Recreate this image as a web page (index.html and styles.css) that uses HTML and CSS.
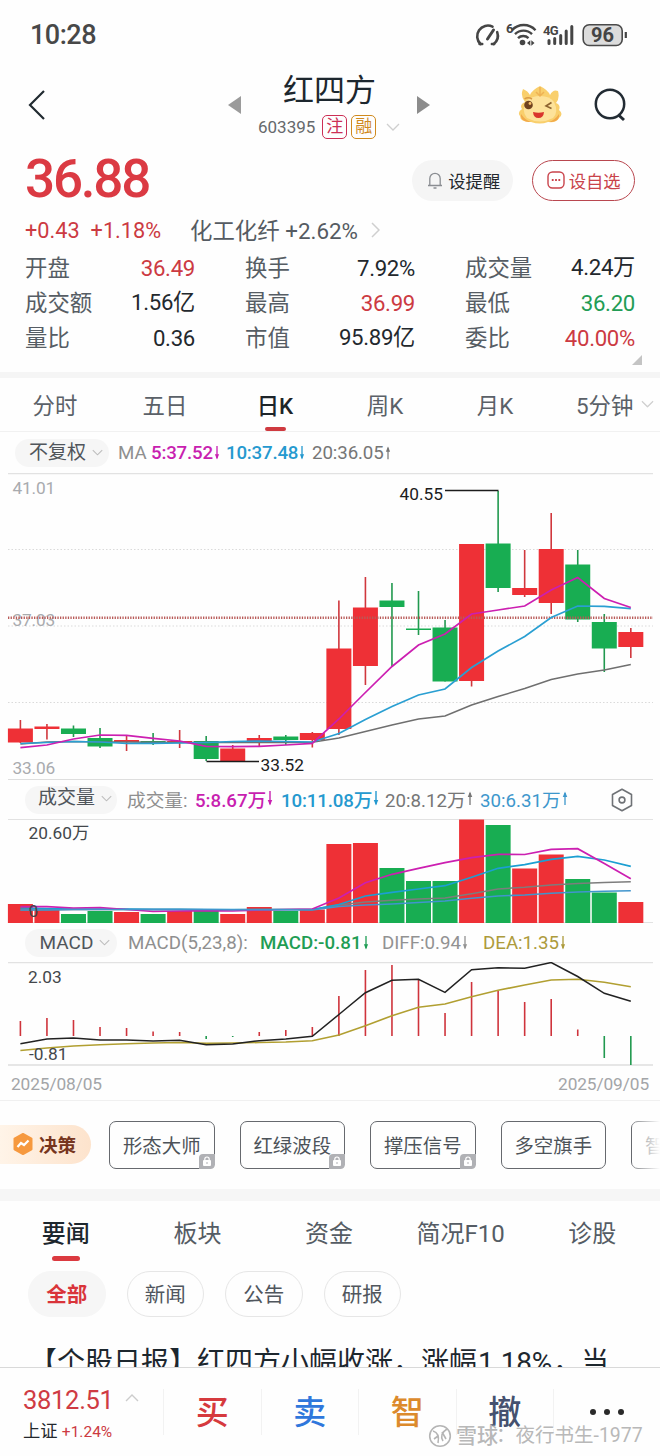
FILE: index.html
```
<!DOCTYPE html>
<html lang="zh-CN">
<head>
    <meta charset="UTF-8">
    <meta name="viewport" content="width=device-width, initial-scale=1.0">
    <title>红四方 603395</title>
    <link rel="stylesheet" href="styles.css">
</head>
<body>

<svg class="defs">
    <symbol id="down" viewBox="0 0 6 16"><path d="M3 0V14" stroke="currentColor" stroke-width="1.5"/><path d="M0.6 9.5H5.4L3 15.5Z" fill="currentColor"/></symbol>
    <symbol id="up" viewBox="0 0 6 16"><path d="M3 2V15" stroke="currentColor" stroke-width="1.4"/><path d="M0.6 6.5H5.4L3 0.5Z" fill="currentColor"/></symbol>
    <symbol id="chev" viewBox="0 0 14 8"><path d="M1 1L7 7L13 1" fill="none" stroke="currentColor" stroke-width="1.3"/></symbol>
    <symbol id="lock" viewBox="0 0 16 15"><path d="M4 0H16V10Q16 15 11 15H0V4Q0 0 4 0Z" fill="#b0b1b5"/><rect x="4" y="6" width="8" height="6" rx="1" fill="#fff"/><path d="M5.8 6.5V5.2a2.2 2.2 0 0 1 4.4 0V6.5" fill="none" stroke="#fff" stroke-width="1.2"/><path d="M8 8V10" stroke="#b0b1b5" stroke-width="1"/></symbol>
</svg>

<div class="phone">

    <!-- 状态栏 -->
    <div class="status">
        <span class="clock">10:28</span>
        <svg class="status-icons" width="154" height="26" viewBox="475 21 154 26">
            <g fill="none" stroke="#454545" stroke-width="2.6" stroke-linecap="round">
                <path d="M480.5 43A10.7 10.7 0 0 1 492.5 25.6"/>
                <path d="M497.2 31.2A10.7 10.7 0 0 1 493.8 43"/>
                <path d="M487.5 38L493.5 29" stroke-width="3"/>
                <path d="M479.5 43h2.8M491.8 43h2.4" stroke-width="2.4"/>
            </g>
            <text class="tiny" x="506" y="32">6</text>
            <g fill="none" stroke="#454545" stroke-width="2.4">
                <path d="M512 29.2A16 16 0 0 1 535.5 29.2"/>
                <path d="M515 33.2A12 12 0 0 1 532 33.2"/>
                <path d="M518 37.2A7.5 7.5 0 0 1 528.5 37.2"/>
            </g>
            <circle cx="522.5" cy="41.5" r="2.8" fill="#454545"/>
            <path d="M527 42L530.3 39.2V44.8ZM534.5 42L531.3 39.2V44.8Z" fill="#454545"/>
            <text class="tiny" x="543" y="33.5">4G</text>
            <g stroke="#454545" stroke-width="3" stroke-linecap="round">
                <path d="M549 39.5V42.5M554.7 37.5V42.5M560.7 34.5V42.5M566.2 30V42.5M571.8 25.5V42.5"/>
            </g>
            <rect x="583.2" y="23.7" width="39" height="20.8" rx="6" fill="#dcdcdc" stroke="#4a4a4a" stroke-width="1.6"/>
            <path d="M625.8 31V37" stroke="#454545" stroke-width="2.2"/>
            <text class="battery" x="591" y="41.3">96</text>
        </svg>
    </div>

    <!-- 标题 -->
    <div class="header">
        <svg class="back" width="20" height="32" viewBox="0 0 20 32"><path d="M17 2L3 16L17 30" fill="none" stroke="#222b31" stroke-width="2.2"/></svg>
        <svg class="prev" width="13" height="18"><path d="M0 9L13 0V18Z" fill="#9b9b9b"/></svg>
        <div class="name">
            <h1>红四方</h1>
            <div class="code">
                <span>603395</span><b class="tag zhu">注</b><b class="tag rong">融</b>
                <svg width="14" height="8"><use href="#chev"/></svg>
            </div>
        </div>
        <svg class="next" width="13" height="18"><path d="M13 9L0 0V18Z" fill="#8c8c8c"/></svg>
        <svg class="dragon" width="46" height="40" viewBox="518 84 46 40">
            <path d="M526 101Q521 95 524 88Q529 90 531 94Q533 89 541 85Q549 89 551 94Q554 88 559 90Q561 97 557 102Q562 104 560 109Q565 113 560 117Q558 122 549 121Q541 124 532 121Q521 121 521 115Q518 111 523 108Q520 104 526 101Z" fill="#f9cf6c"/>
            <path d="M527 100Q533 95 541 95Q551 95 555 101Q560 111 554 117Q541 124 528 117Q522 110 527 100Z" fill="#fde29a"/>
            <path d="M522 113Q526 119 532 121Q521 121 522 113ZM560 113Q556 119 550 121Q561 121 560 113Z" fill="#f2a94b"/>
            <path d="M541 86V95M537 91L541 95L545 91" fill="none" stroke="#eeb254" stroke-width="1.5"/>
            <circle cx="529.5" cy="104" r="4.3" fill="#70421f"/>
            <circle cx="531" cy="102.5" r="1.4" fill="#f6bf6b"/>
            <path d="M552.5 101.5L547 105L552.5 107.5" fill="none" stroke="#8e632f" stroke-width="1.6"/>
            <path d="M534 111Q539.5 112.5 545 111Q544.5 117 539.5 117Q534.5 117 534 111Z" fill="#d9352c"/>
            <path d="M525.5 98Q529 95.5 533 98" fill="none" stroke="#d99a47" stroke-width="1.5"/>
        </svg>
        <svg class="search" width="34" height="36" viewBox="0 0 34 36"><circle cx="16" cy="17" r="14.2" fill="none" stroke="#222b33" stroke-width="2.5"/><path d="M24 27.5L30 33" stroke="#222b33" stroke-width="3"/></svg>
    </div>

    <!-- 价格 -->
    <div class="price-row">
        <span class="price">36.88</span>
        <button class="remind">
            <svg width="16" height="18" viewBox="0 0 16 18"><path d="M1 14.5H15M2.8 14V7.5a5.2 5.2 0 0 1 10.4 0V14M6.5 17H9.5" fill="none" stroke="#8a8d92" stroke-width="1.3"/></svg>设提醒
        </button>
        <button class="choose">
            <svg width="18" height="18" viewBox="0 0 18 18"><rect x="1" y="1" width="16" height="16" rx="4.5" fill="none" stroke="#c9434b" stroke-width="1.4"/><path d="M4.8 9h1.8M8.1 9h1.8M11.4 9h1.8" stroke="#c9434b" stroke-width="1.8"/></svg>设自选
        </button>
    </div>
    <div class="change">
        <span class="red">+0.43</span><span class="red pct">+1.18%</span>
        <span class="sector">化工化纤 +2.62%</span>
        <svg width="9" height="16" viewBox="0 0 9 16"><path d="M1 1L8 8L1 15" fill="none" stroke="#cfcfcf" stroke-width="1.5"/></svg>
    </div>
    <div class="stats">
        <div><label>开盘</label><span class="red">36.49</span></div>
        <div><label>换手</label><span>7.92%</span></div>
        <div><label>成交量</label><span class="cn">4.24万</span></div>
        <div><label>成交额</label><span class="cn">1.56亿</span></div>
        <div><label>最高</label><span class="red">36.99</span></div>
        <div><label>最低</label><span class="green">36.20</span></div>
        <div><label>量比</label><span>0.36</span></div>
        <div><label>市值</label><span class="cn">95.89亿</span></div>
        <div><label>委比</label><span class="red">40.00%</span></div>
    </div>
    <div class="corner"><svg width="10" height="10"><path d="M10 0V10H0Z" fill="#c4c4c4"/></svg></div>

    <!-- K线 -->
    <div class="ktabs">
        <span>分时</span><span>五日</span><span class="active">日K</span><span>周K</span><span>月K</span>
        <span class="more">5分钟<svg width="13" height="8" viewBox="0 0 14 8"><use href="#chev"/></svg></span>
    </div>
    <div class="info ma">
        <span class="pill">不复权<svg width="11" height="7" viewBox="0 0 14 8"><use href="#chev"/></svg></span>
        <span class="lbl">MA</span>
        <span class="m5">5:37.52<svg width="6" height="14"><use href="#down"/></svg></span>
        <span class="m10">10:37.48<svg width="6" height="14"><use href="#down"/></svg></span>
        <span class="m20">20:36.05<svg width="6" height="14"><use href="#up"/></svg></span>
    </div>
    <svg id="kline" width="660" height="307" viewBox="0 473 660 307"></svg>

    <div class="info vol">
        <span class="pill">成交量<svg width="11" height="7" viewBox="0 0 14 8"><use href="#chev"/></svg></span>
        <span class="lbl">成交量:</span>
        <span class="m5">5:8.67万<svg width="6" height="15"><use href="#down"/></svg></span>
        <span class="m10">10:11.08万<svg width="6" height="15"><use href="#down"/></svg></span>
        <span class="m20">20:8.12万<svg width="6" height="15"><use href="#up"/></svg></span>
        <span class="m30">30:6.31万<svg width="6" height="15"><use href="#up"/></svg></span>
        <svg class="gear" width="22" height="24" viewBox="0 0 22 24"><path d="M11 1.2L20.5 6.5V17.5L11 22.8L1.5 17.5V6.5Z" fill="none" stroke="#6f7276" stroke-width="1.6" stroke-linejoin="round"/><circle cx="11" cy="12" r="2.9" fill="none" stroke="#6f7276" stroke-width="1.6"/></svg>
    </div>
    <svg id="volume" width="660" height="104" viewBox="0 819 660 104"></svg>

    <div class="info macd">
        <span class="pill">MACD<svg width="11" height="7" viewBox="0 0 14 8"><use href="#chev"/></svg></span>
        <span class="lbl">MACD(5,23,8):</span>
        <span class="mg">MACD:-0.81<svg width="6" height="14"><use href="#down"/></svg></span>
        <span class="md">DIFF:0.94<svg width="6" height="14"><use href="#down"/></svg></span>
        <span class="me">DEA:1.35<svg width="6" height="14"><use href="#down"/></svg></span>
    </div>
    <svg id="macd" width="660" height="104" viewBox="0 962 660 104"></svg>
    <div class="dates"><span>2025/08/05</span><span>2025/09/05</span></div>

    <!-- 决策工具 -->
    <div class="tools">
        <div class="decide">
            <svg width="20" height="22" viewBox="0 0 20 22"><path d="M10 1L18.5 5.7V16.3L10 21L1.5 16.3V5.7Z" fill="#f6993f" stroke="#f6993f" stroke-width="2" stroke-linejoin="round"/><path d="M4.5 14L8 10L11 12L15.5 7.5" fill="none" stroke="#fff" stroke-width="2.2"/></svg>决策
        </div>
        <div class="tool">形态大师<svg width="16" height="15"><use href="#lock"/></svg></div>
        <div class="tool">红绿波段<svg width="16" height="15"><use href="#lock"/></svg></div>
        <div class="tool">撑压信号<svg width="16" height="15"><use href="#lock"/></svg></div>
        <div class="tool">多空旗手</div>
        <div class="tool last">智</div>
    </div>

    <!-- 资讯 -->
    <div class="ntabs">
        <span class="active">要闻</span><span>板块</span><span>资金</span><span>简况F10</span><span>诊股</span>
    </div>
    <div class="chips">
        <span class="on">全部</span><span>新闻</span><span>公告</span><span>研报</span>
    </div>
    <div class="news">【个股日报】红四方小幅收涨，涨幅<i>1.18%</i>，当</div>

    <!-- 底部 -->
    <div class="bottom">
        <div class="index">
            <div class="idx">3812.51<svg width="14" height="8"><path d="M1 7L7 1L13 7" fill="none" stroke="#cccccc" stroke-width="1.4"/></svg></div>
            <div class="sz">上证 <span>+1.24%</span></div>
        </div>
        <div class="act buy">买</div>
        <div class="act sell">卖</div>
        <div class="act smart">智</div>
        <div class="act undo">撤</div>
        <div class="dots"><i></i><i></i><i></i></div>
        <div class="mark">
            <svg width="24" height="24" viewBox="0 0 24 24"><circle cx="12" cy="12" r="10.3" fill="#fff" fill-opacity=".6" stroke="#b5b5b5" stroke-width="1.6"/><path d="M5 7Q12 9 10 19M19 5Q11 10 15 17M6 15L10 12M14 8L18 15" fill="none" stroke="#b5b5b5" stroke-width="1.6"/></svg>
            <b>雪球</b><span>：夜行书生-1977</span>
        </div>
    </div>
</div>

<script>
    var RED = '#ee3036', GREEN = '#18ad52';
    // 每根K线: 颜色, 最高, 实体上, 实体下, 最低
    var candles = [
        ['r',720,728.5,742.5,743],['r',724,726.5,729,739.5],['g',725.5,728.5,734,737],['g',728,738,746.5,748],
        ['r',736,740,742,751],['g',733,741,743,745],['r',730,741,743,748],['g',736,741,759,761],
        ['r',745,748.5,761,761],['r',735,738,742,747],['g',735,736.5,740,745],['r',732,733,740,747.5],
        ['r',600.5,648.5,729,735],['r',577,607.5,666,685],['g',583,600.5,607,667],['g',591,628.5,630,635],
        ['g',620,627.5,681.5,681.5],['r',544,544,681,686.5],['g',491,543.5,588,592],['r',550,588,595,597],
        ['r',513,549,603,614],['g',550,564.5,619.5,622],['g',614,622,648.5,672],['r',628,632,647,658]
    ];
    var vols = [904,910,914,911,912,914,911,911,914,907,911,909.5,844,843,868,881,881,819.5,825,868.5,854.5,879,892.5,902];
    var bars = [1021,1018,1020,1027,1028,1031.5,1032,1039,1037,1032,1030,1027,996,970,965,980,1013,982,991,1002,999,1029.5,1058,1065];

    function x(i) { return 20.4 + 26.54 * i; }
    function line(d, color, w) {
        var pts = d.map(function(y, i) { return x(i).toFixed(1) + ',' + y; }).join(' ');
        return '<polyline points="' + pts + '" fill="none" stroke="' + color + '" stroke-width="' + (w || 1.5) + '"/>';
    }
    function rule(y, color, w, dash) {
        return '<path d="M8 ' + y + 'H653" stroke="' + color + '" stroke-width="' + w + '"' + (dash ? ' stroke-dasharray="' + dash + '"' : '') + '/>';
    }
    function rect(i, top, bottom, color) {
        return '<rect x="' + (x(i) - 12.5) + '" y="' + top + '" width="25" height="' + (bottom - top) + '" fill="' + color + '"/>';
    }
    function stick(i, top, bottom, color) {
        return '<path d="M' + x(i) + ' ' + top + 'V' + bottom + '" stroke="' + color + '" stroke-width="1.6"/>';
    }
    function text(px, py, s, cls) { return '<text x="' + px + '" y="' + py + '" class="' + cls + '">' + s + '</text>'; }

    // 主图
    var k = rule(473.6, '#e2e2e2', 1.5) + rule(779.5, '#dedede', 1.2);
    [549.5, 626, 702.5].forEach(function(y) { k += rule(y, '#dadada', 1, '1.5 2'); });
    candles.forEach(function(c, i) {
        var color = c[0] == 'r' ? RED : GREEN;
        k += stick(i, c[1], c[4], c[0] == 'r' ? '#d0373d' : '#21994f') + rect(i, c[2], c[3], color);
    });
    k += text(12.5, 493.5, '41.01', 'axis') + text(12.5, 626, '37.03', 'axis') + text(12.5, 774, '33.06', 'axis');
    k += rule(617.7, '#b85a58', 2.4, '1.3 1.3');
    k += line([744,742,741.5,742,742,742.3,742.5,742.5,742.5,742.5,742.5,742.3,738,731.5,725,719,716,705,696.5,688.5,679.5,674,670,664.5], '#6f6f6f');
    k += line([743.5,742.5,741.5,742,743.5,743.3,743,742.5,741.5,741,741.5,742,733.5,719.5,706.5,695,689,667.5,651,636.5,617.5,606,606.3,608.7], '#2a9fd2', 1.7);
    k += line([747.7,745,739,735,735.3,738.3,741,746.3,746.6,746.3,745,743.3,719,692.5,666.5,645,634,614,610,606,590,577.5,598.5,607.5], '#cc1fb1', 1.7);
    k += '<path d="M445 490.5H498.5M206.5 761.5H259" stroke="#1c1c1c" stroke-width="1.4"/>';
    k += text(399.5, 499.5, '40.55', 'peak') + text(260.5, 770.5, '33.52', 'peak');
    document.getElementById('kline').innerHTML = k;

    // 成交量
    var v = rule(819.5, '#e2e2e2', 1.2) + rule(922.5, '#e2e2e2', 1);
    vols.forEach(function(y, i) { v += rect(i, y, 923, candles[i][0] == 'r' ? RED : GREEN); });
    v += line([910,909.8,909.5,909.5,909.5,909.5,909.5,909.7,909.7,909.5,909.5,909.5,905,902,900.3,899,898,893.7,889,887.3,885,883.5,882.5,881.7], '#7d7d7d');
    v += line([908,908.5,909,909,909,909.3,909.3,909.5,909.5,909.5,909.5,909.5,904.5,896,892.3,889,885.7,877.3,868.3,864.7,859.3,856.3,860,866.3], '#1c9fd2', 1.7);
    v += line([906.7,906.7,908,907.5,909.5,911.5,911,910.7,911,910,909.5,909,898,882.7,874.3,868.3,862.7,857.7,854.3,854.5,849.3,848.7,863.5,878.7], '#cc1fb1', 1.7);
    v += line([910,910,909.5,909.5,909.5,909.5,909.5,909.5,909.7,909.7,909.8,910,906.5,905,904,902.5,901,898.3,896,895,893.3,892,891.3,890.7], '#4195cd', 1.6);
    v += text(28.5, 839, '20.60万', 'num') + text(28.5, 917, '0', 'num');
    document.getElementById('volume').innerHTML = v;

    // MACD
    var m = rule(962.6, '#e2e2e2', 1.4) + rule(1065, '#dedede', 1.4);
    bars.forEach(function(y, i) {
        m += y < 1036 ? stick(i, y, 1036, '#cf343c') : stick(i, 1036, y, '#21994f');
    });
    m += line([1050.5,1048,1046,1044.7,1043.7,1043,1042.5,1043.3,1043,1042.5,1042,1040.7,1035,1025.7,1015.7,1007.3,1004,996.7,990.3,985,980,979.3,982.3,986.7], '#b19f31', 1.6);
    m += line([1043.7,1039,1038,1040,1040,1041,1040.3,1044.7,1044,1040.7,1039,1036.3,1014.5,992.7,980.3,979.3,992.3,969.7,967.7,968.3,962.5,976.5,993.3,1001.3], '#222', 1.5);
    m += text(28, 982.5, '2.03', 'num') + text(29, 1060, '-0.81', 'num');
    document.getElementById('macd').innerHTML = m;
</script>

</body>
</html>
```
FILE: styles.css
```
* {
    box-sizing: border-box;
}

body {
    margin: 0;
    background: #fefefe;
    font-family: Roboto, "Noto Sans CJK SC", sans-serif;
    color: #23282d;
}

svg {
    display: block;
    flex: none;
}

.defs {
    position: absolute;
    width: 0;
    height: 0;
}

.phone {
    width: 660px;
    height: 1456px;
    overflow: hidden;
    display: flex;
    flex-direction: column;
}

.phone > * {
    flex: none;
    white-space: nowrap;
}

.red { color: #cc3a42 !important; }
.green { color: #229c55 !important; }

/* 状态栏 */
.status {
    height: 68px;
    padding: 1px 31px 0 30px;
    display: flex;
    justify-content: space-between;
    align-items: center;
}

.clock {
    font-size: 27px;
    font-weight: 500;
    color: #484848;
    letter-spacing: -0.5px;
}

.tiny {
    font-size: 13px;
    font-weight: 700;
    fill: #454545;
    letter-spacing: -0.8px;
}

.battery {
    font-size: 20px;
    font-weight: 700;
    fill: #454545;
}

/* 标题 */
.header {
    height: 82px;
    display: flex;
    align-items: center;
    padding: 0 32px 8px 27px;
}

.prev { margin-left: 181px; }

.name {
    width: 178px;
    padding-left: 17px;
}

.name h1 {
    margin: 0 0 0 25px;
    font-size: 31px;
    line-height: 42px;
    font-weight: 400;
    color: #1d272e;
}

.code {
    display: flex;
    align-items: center;
    height: 26px;
    margin-top: 2px;
    font-size: 17px;
    color: #66696c;
}

.code span { margin-right: 3px; }
.code svg { margin-left: 10px; color: #cfcfcf; }

.tag {
    width: 25px;
    height: 24px;
    margin-left: 4px;
    border: 1.4px solid;
    border-radius: 5px;
    font-size: 17px;
    line-height: 21px;
    text-align: center;
    font-weight: 400;
}

.zhu { color: #cc2f55; }
.rong { color: #d08a1e; }
.dragon { margin-left: 87px; }
.search { margin-left: 31px; }

/* 价格 */
.price-row {
    height: 60px;
    padding: 0 25px;
    display: flex;
    align-items: center;
}

.price {
    width: 388px;
    font-size: 53px;
    line-height: 58px;
    font-weight: 500;
    color: #db3a43;
    letter-spacing: -2.2px;
    padding-bottom: 3px;
}

button {
    font-family: inherit;
    font-size: 17.3px;
    height: 41px;
    border: none;
    border-radius: 21px;
    display: flex;
    align-items: center;
    justify-content: center;
    gap: 5px;
    padding: 0;
    color: #23282d;
}

.remind { width: 101px; padding-left: 2px; background: #f5f5f5; }

.choose {
    width: 103px;
    margin-left: 19px;
    background: #fff;
    border: 1.4px solid #b9474f;
    color: #c9434b;
    gap: 4px;
}

.change {
    height: 39px;
    padding: 1px 25px 0;
    display: flex;
    align-items: center;
    font-size: 21.7px;
    color: #555b62;
}

.pct { margin-left: 11px; }

.sector {
    margin: 0 13px 0 29px;
    padding-bottom: 3px;
    font-size: 22.4px;
}

.stats {
    height: 106px;
    padding: 1px 25px 0;
    display: grid;
    grid-template-columns: 1fr 1fr 1fr;
    column-gap: 50px;
    grid-auto-rows: 35px;
}

.stats div {
    display: flex;
    justify-content: space-between;
    align-items: center;
    font-size: 22.2px;
    letter-spacing: -0.3px;
}

.stats label {
    padding-bottom: 4px;
    font-size: 22.4px;
    letter-spacing: 0;
    color: #565d64;
}

.stats .cn { padding-bottom: 5px; }

.corner {
    height: 23px;
    padding-right: 18px;
    display: flex;
    justify-content: flex-end;
    align-items: flex-start;
    border-bottom: 6px solid #f5f5f5;
}

/* K线 */
.ktabs {
    height: 54px;
    display: flex;
    border-bottom: 1px solid #f1f1f1;
    font-size: 22.4px;
    color: #5b6168;
}

.ktabs span {
    width: 110px;
    text-align: center;
    line-height: 57px;
}

.ktabs .active {
    color: #1d2429;
    font-weight: 500;
    display: flex;
    flex-direction: column;
    align-items: center;
}

.ktabs .active::after {
    content: "";
    width: 21px;
    height: 4px;
    margin-top: -8px;
    border-radius: 2px;
    background: #cf3a40;
}

.ktabs .more {
    display: flex;
    align-items: center;
    padding-left: 26px;
    padding-top: 3px;
}

.more svg { margin-left: 8px; margin-top: -4px; color: #cfcfcf; }

.info {
    height: 41px;
    display: flex;
    align-items: center;
    font-size: 18.7px;
    color: #767676;
}

.info span {
    display: flex;
    align-items: center;
}

.info span svg { margin-left: 1px; }
.info .lbl { color: #8f8f8f; }

.info .pill {
    width: 94px;
    height: 28px;
    margin-left: 15px;
    padding-left: 8px;
    border-radius: 14px;
    background: #f6f6f6;
    color: #50555b;
    font-size: 19px;
    line-height: 24px;
    justify-content: center;
}

.info .pill svg { margin-left: 6px; color: #bcbcbc; }
.info .m5 { color: #c81fb0; font-weight: 500; }
.info .m10 { color: #2599cf; font-weight: 500; }
.info .m30 { color: #3d97cc; }

.ma .lbl { margin-left: 9px; width: 33px; }
.ma .m5 { width: 75px; letter-spacing: -0.2px; }
.ma .m10 { width: 86px; letter-spacing: -0.2px; }
.ma .m20 { letter-spacing: -0.1px; }

.vol { height: 39px; }
.vol span { padding-bottom: 3px; }
.vol .pill, .macd .pill { width: 92px; margin-left: 25px; }
.vol .lbl { margin-left: 10px; width: 68px; }
.vol .m5 { width: 86px; }
.vol .m10 { width: 104px; letter-spacing: -0.15px; }
.vol .m20 { width: 95px; }
.vol .m30 { width: 131px; }

.macd { height: 39px; }
.macd .lbl { margin-left: 11px; width: 132px; }
.macd .mg { width: 122px; color: #1f9d54; font-weight: 500; }
.macd .md { width: 101px; color: #929292; }
.macd .me { color: #ad9b3c; }

.axis { font-size: 17.3px; fill: #a9abae; letter-spacing: -0.2px; }
.peak { font-size: 17.3px; fill: #1c1c1c; }
.num { font-size: 17.3px; fill: #43474b; }

.dates {
    height: 35px;
    padding: 2px 11px 0;
    display: flex;
    justify-content: space-between;
    align-items: center;
    font-size: 17.3px;
    letter-spacing: -0.1px;
    color: #a3a5a8;
    border-bottom: 1px solid #f0f0f0;
}

/* 决策工具 */
.tools {
    height: 100px;
    display: flex;
    align-items: center;
    gap: 25px;
    overflow: hidden;
    border-bottom: 12px solid #f6f6f6;
    position: relative;
}

.tools::after {
    content: "";
    position: absolute;
    right: 0;
    top: 0;
    width: 28px;
    height: 88px;
    background: linear-gradient(to right, rgba(254, 254, 254, 0.2), #fefefe);
}

.decide {
    flex: none;
    width: 91px;
    height: 39px;
    margin-top: -1px;
    margin-right: -7px;
    padding: 0 0 2px 13px;
    border-radius: 0 20px 20px 0;
    background: linear-gradient(to right, #fff4e8, #fde3cc);
    display: flex;
    align-items: center;
    gap: 6px;
    font-size: 18.5px;
    font-weight: 700;
    color: #77351d;
}

.tool {
    flex: none;
    position: relative;
    width: 105.5px;
    height: 48px;
    border: 1.4px solid #66696e;
    border-radius: 7px;
    text-align: center;
    font-size: 19.4px;
    line-height: 49px;
    color: #4d5359;
}

.last {
    padding-left: 13px;
    text-align: left;
}

.tool svg {
    position: absolute;
    right: -1px;
    bottom: -1px;
}

/* 资讯 */
.ntabs {
    height: 66px;
    padding-top: 16px;
    display: flex;
    font-size: 24px;
    line-height: 34px;
    color: #555c64;
}

.ntabs span { width: 131.6px; text-align: center; }

.ntabs .active {
    color: #1d272e;
    font-weight: 500;
    display: flex;
    flex-direction: column;
    align-items: center;
}

.ntabs .active::after {
    content: "";
    width: 28px;
    height: 5px;
    margin-top: 5px;
    border-radius: 3px;
    background: #db3a40;
}

.chips {
    height: 56px;
    padding: 4px 28px 0;
    display: flex;
    gap: 21px;
}

.chips span {
    width: 77.5px;
    height: 46px;
    border: 1px solid #e6e6e6;
    border-radius: 23px;
    text-align: center;
    font-size: 20.5px;
    line-height: 47px;
    color: #50565d;
}

.chips .on {
    border-color: #f6f6f6;
    background: #f6f6f6;
    color: #d9343a;
    font-weight: 700;
}

.news {
    height: 44px;
    padding-left: 29px;
    overflow: hidden;
    font-size: 28px;
    line-height: 80px;
    color: #1d272e;
}

.news i {
    font-style: normal;
    display: inline-block;
    width: 76px;
    padding-left: 1px;
    letter-spacing: -0.2px;
}

/* 底部 */
.bottom {
    height: 89px;
    border-top: 1.5px solid #d9d9d9;
    display: flex;
    align-items: center;
    position: relative;
}

.index {
    width: 163px;
    padding: 5px 0 0 23px;
}

.idx {
    display: flex;
    align-items: center;
    font-size: 25.5px;
    line-height: 33px;
    color: #cf3b43;
    letter-spacing: -0.3px;
}

.idx svg { margin-left: 11px; margin-top: -4px; }
.sz { font-size: 17.3px; line-height: 28px; }
.sz span { font-size: 15.5px; color: #cc3a42; }

.act {
    width: 97.5px;
    height: 46px;
    border-left: 1px solid #f2f2f2;
    text-align: center;
    font-size: 33px;
    line-height: 48px;
    font-weight: 500;
}

.buy { color: #d63a3e; }
.sell { color: #2f77dc; }
.smart { color: #dc8a2c; }
.undo { color: #45516f; }

.dots {
    width: 107px;
    height: 46px;
    border-left: 1px solid #f2f2f2;
    display: flex;
    align-items: center;
    justify-content: center;
    gap: 8px;
}

.dots i {
    width: 6px;
    height: 6px;
    border-radius: 50%;
    background: #2a2a2a;
}

.mark {
    position: absolute;
    left: 428px;
    bottom: 7px;
    height: 26px;
    display: flex;
    align-items: center;
    font-size: 19.5px;
    line-height: 22px;
    color: #b8b8b8;
    text-shadow: 0 0 2px #fff, 1px 1px 0 #fff;
}

.mark b {
    margin-left: 4px;
    font-weight: 500;
    font-size: 21px;
}

.mark span { margin-left: -2px; }
```
